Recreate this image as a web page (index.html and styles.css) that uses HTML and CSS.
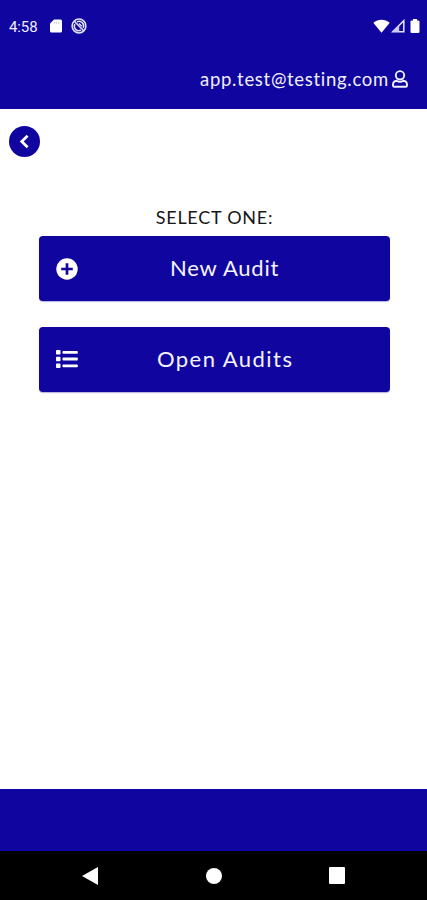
FILE: index.html
```html
<!DOCTYPE html>
<html lang="en">
<head>
<meta charset="utf-8">
<title>Audits</title>
<link rel="stylesheet" href="styles.css">
</head>
<body>
<div class="app">
  <div class="status">
    <span class="time">4:58</span>
    <svg class="sd" width="12" height="14" viewBox="0 0 12 14"><path d="M4 0.5h6.5a1.5 1.5 0 0 1 1.5 1.5v10a1.5 1.5 0 0 1-1.5 1.5h-9A1.5 1.5 0 0 1 0 12V4.5z" fill="#fff"/><path d="M4.2 2.7v2M6.4 2.7v2M8.6 2.7v2" stroke="#b9b6e8" stroke-width=".8"/></svg>
    <svg class="sync" width="16" height="16" viewBox="0 0 16 16" fill="none" stroke="#e2e1fa"><circle cx="8" cy="8" r="6.9" stroke-width="1.5"/><path d="M3.3 3.3l9.4 9.4" stroke-width="1.6"/><path d="M6 3.800a4.600 4.600 0 0 1 6.200 6.100M10 12.200a4.600 4.600 0 0 1-6.200-6.100M8 5.500l2.700 2.700" stroke-width="1.5"/></svg>
    <span class="grow"></span>
    <svg width="17" height="14" viewBox="0 0 17 14"><path d="M.3 3.8C5-.3 12-.3 16.7 3.8L8.5 13.7z" fill="#fff"/></svg>
    <svg class="signal" width="14" height="14" viewBox="0 0 14 14"><path d="M1.700 12.800L12.800 1.700v11.100z" fill="none" stroke="#e5e4fb" stroke-width="1.5"/><path d="M8.200 6.200v6.600H1.700z" fill="#c9c7f1"/></svg>
    <svg class="battery" width="10" height="14" viewBox="0 0 10 14"><path d="M3 0h4v1.4h1.3A1.2 1.2 0 0 1 9.5 2.6v10.2A1.2 1.2 0 0 1 8.3 14H1.7A1.2 1.2 0 0 1 .5 12.800V2.600A1.2 1.2 0 0 1 1.700 1.400H3z" fill="#fff"/></svg>
  </div>
  <header class="header">
    <span class="email">app.test@testing.com</span>
    <svg width="16" height="18" viewBox="0 0 16 18" fill="none" stroke="#f0effd" stroke-width="1.9"><circle cx="8" cy="5.300" r="4.200"/><path d="M4.600 10.700C2.300 11 1 12.700 1 14.600v.9c0 .8.500 1.300 1.300 1.300h11.400c.8 0 1.300-.5 1.300-1.300v-.9c0-1.900-1.300-3.600-3.600-3.900-1.100.8-2.200 1.200-3.400 1.200s-2.300-.4-3.400-1.200z"/></svg>
  </header>
  <main class="main">
    <div class="back"><svg width="31" height="31" viewBox="0 0 31 31"><circle cx="15.500" cy="15.500" r="15.500" fill="#10069f"/><path d="M18.600 9.700l-5.900 5.800 5.900 5.800" fill="none" stroke="#fff" stroke-width="2.700"/></svg></div>
    <h1 class="title">SELECT ONE:</h1>
    <div class="button">
      <svg width="22" height="22" viewBox="0 0 22 22"><circle cx="11" cy="11" r="10.700" fill="#fff"/><path d="M11 5.200v11.600M5.200 11h11.600" stroke="#10069f" stroke-width="2.700"/></svg>
      <span class="label new">New Audit</span>
    </div>
    <div class="button">
      <svg width="22" height="22" viewBox="0 0 22 22" fill="#fff"><rect y="1" width="4.500" height="4.500" rx=".8"/><rect y="7.800" width="4.500" height="4.500" rx=".8"/><rect y="14.600" width="4.500" height="4.500" rx=".8"/><rect x="6.500" y="1.900" width="15.300" height="2.900" rx=".8"/><rect x="6.500" y="8.600" width="15.300" height="2.900" rx=".8"/><rect x="6.500" y="15.400" width="15.300" height="2.900" rx=".8"/></svg>
      <span class="label open">Open Audits</span>
    </div>
  </main>
  <footer class="footer"></footer>
  <nav class="nav">
    <svg width="16" height="18" viewBox="0 0 16 18"><path d="M0 9L16 0v18z" fill="#fff"/></svg>
    <svg width="16" height="16" viewBox="0 0 16 16"><circle cx="8" cy="8" r="8" fill="#fff"/></svg>
    <svg width="16" height="17" viewBox="0 0 16 17"><rect width="16" height="17" rx="1" fill="#fff"/></svg>
  </nav>
</div>
</body>
</html>
```
FILE: styles.css
```css
* { box-sizing: border-box; }
body { margin: 0; background: #fff; font-family: Lato, sans-serif; }
svg { display: block; flex: none; }
.app { display: flex; flex-direction: column; height: 900px; width: 427px; overflow: hidden; }
.status { height: 52px; background: #10069f; color: #f0effd; display: flex; align-items: center; padding: 0 7px 0 9px; }
.time { width: 41px; font: 15px/20px Roboto, sans-serif; letter-spacing: -.1px; padding-top: 1px; }
.sync { margin-left: 9px; }
.grow { flex: 1; }
.signal { margin-left: 1px; }
.battery { margin-left: 5px; }
.header { height: 57px; background: #10069f; color: #f0effd; display: flex; justify-content: space-between; align-items: flex-start; padding: 18px 19px 0 200px; }
.email { margin-top: -1px; font-size: 18.5px; line-height: 20px; letter-spacing: .7px; white-space: nowrap; }
.main { flex: 1; padding: 17px 37px 0 39px; }
.back { margin-left: -30px; }
.title { margin: 49px 0 8px; font-size: 18px; line-height: 22px; font-weight: 400; text-align: center; color: #171717; letter-spacing: .75px; }
.button { height: 65px; margin-bottom: 26px; border-radius: 4px; background: #10069f; color: #f5f4ff; display: flex; align-items: center; padding: 0 17px; box-shadow: 0 1px 1px #10069f50; }
.label { flex: 1; margin-top: -2px; font-size: 22px; line-height: 28px; white-space: nowrap; }
.new { padding-left: 92px; letter-spacing: .8px; }
.open { padding-left: 79px; letter-spacing: 1.45px; }
.footer { height: 62px; background: #10069f; }
.nav { height: 49px; background: #000; display: flex; justify-content: space-between; align-items: center; padding: 0 82px 0 82px; }
```
